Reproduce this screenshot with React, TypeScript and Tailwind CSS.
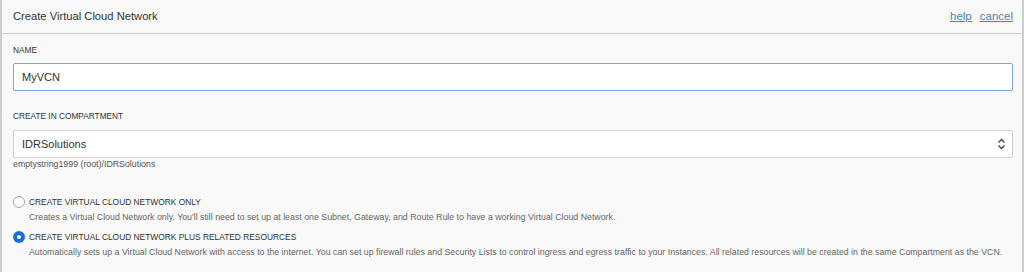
const font = { fontFamily: '"Liberation Sans", Arial, sans-serif' };

const RadioOption = ({ checked, title, desc }: { checked: boolean; title: string; desc: string }) => (
    <div className="flex flex-col">
        <div className="flex items-center h-[14px]">
            {checked ? (
                <div className="w-[12px] h-[12px] rounded-full bg-[#1d6fd8] flex items-center justify-center">
                    <div className="w-[4px] h-[4px] rounded-full bg-white"></div>
                </div>
            ) : (
                <div className="w-[12px] h-[12px] rounded-full border border-[#a8a8a8] bg-white"></div>
            )}
            <span className="ml-[4px] text-[8.4px] leading-[14px] text-[#333]">{title}</span>
        </div>
        <p className="mt-[2px] ml-[16px] text-[8.8px] leading-[12px] text-[#666]">{desc}</p>
    </div>
);

const App = () => {
    return (
        <div className="w-[1024px] h-[272px] overflow-hidden bg-[#f9f9f9] border-x-2 border-[#cdcdcd]" style={font}>
            <div className="h-[34px] border-b border-[#cccccc] flex items-center justify-between pl-[11px] pr-[9px]">
                <span className="text-[11.2px] text-[#333]">Create Virtual Cloud Network</span>
                <div className="flex gap-[8px] text-[11.5px] text-[#4a80c4] underline">
                    <a>help</a>
                    <a>cancel</a>
                </div>
            </div>
            <div className="pl-[11px] pr-[9px] flex flex-col">
                <p className="mt-[10px] text-[8.3px] leading-[12px] text-[#333]">NAME</p>
                <div className="mt-[7px] h-[28px] bg-white border border-[#7da6dc] rounded-[2px] flex items-center px-[8px]">
                    <span className="text-[11px] text-[#333]">MyVCN</span>
                </div>
                <p className="mt-[19px] text-[8.3px] leading-[12px] text-[#333]">CREATE IN COMPARTMENT</p>
                <div className="mt-[8px] h-[28px] bg-white border border-[#cfcfd6] rounded-[2px] flex items-center justify-between pl-[8px] pr-[6px]">
                    <span className="text-[11px] text-[#333]">IDRSolutions</span>
                    <svg width="9" height="12" viewBox="0 0 9 12" fill="none" stroke="#444" strokeWidth="1.4">
                        <path d="M1.5 4.5 L4.5 1.5 L7.5 4.5" />
                        <path d="M1.5 7.5 L4.5 10.5 L7.5 7.5" />
                    </svg>
                </div>
                <p className="mt-[1px] text-[8.8px] leading-[11px] text-[#555]">emptystring1999 (root)/IDRSolutions</p>
                <div className="mt-[25px]">
                    <RadioOption
                        checked={false}
                        title="CREATE VIRTUAL CLOUD NETWORK ONLY"
                        desc="Creates a Virtual Cloud Network only. You'll still need to set up at least one Subnet, Gateway, and Route Rule to have a working Virtual Cloud Network."
                    />
                </div>
                <div className="mt-[7px]">
                    <RadioOption
                        checked={true}
                        title="CREATE VIRTUAL CLOUD NETWORK PLUS RELATED RESOURCES"
                        desc="Automatically sets up a Virtual Cloud Network with access to the internet. You can set up firewall rules and Security Lists to control ingress and egress traffic to your Instances. All related resources will be created in the same Compartment as the VCN."
                    />
                </div>
            </div>
        </div>
    );
};

export default App;
